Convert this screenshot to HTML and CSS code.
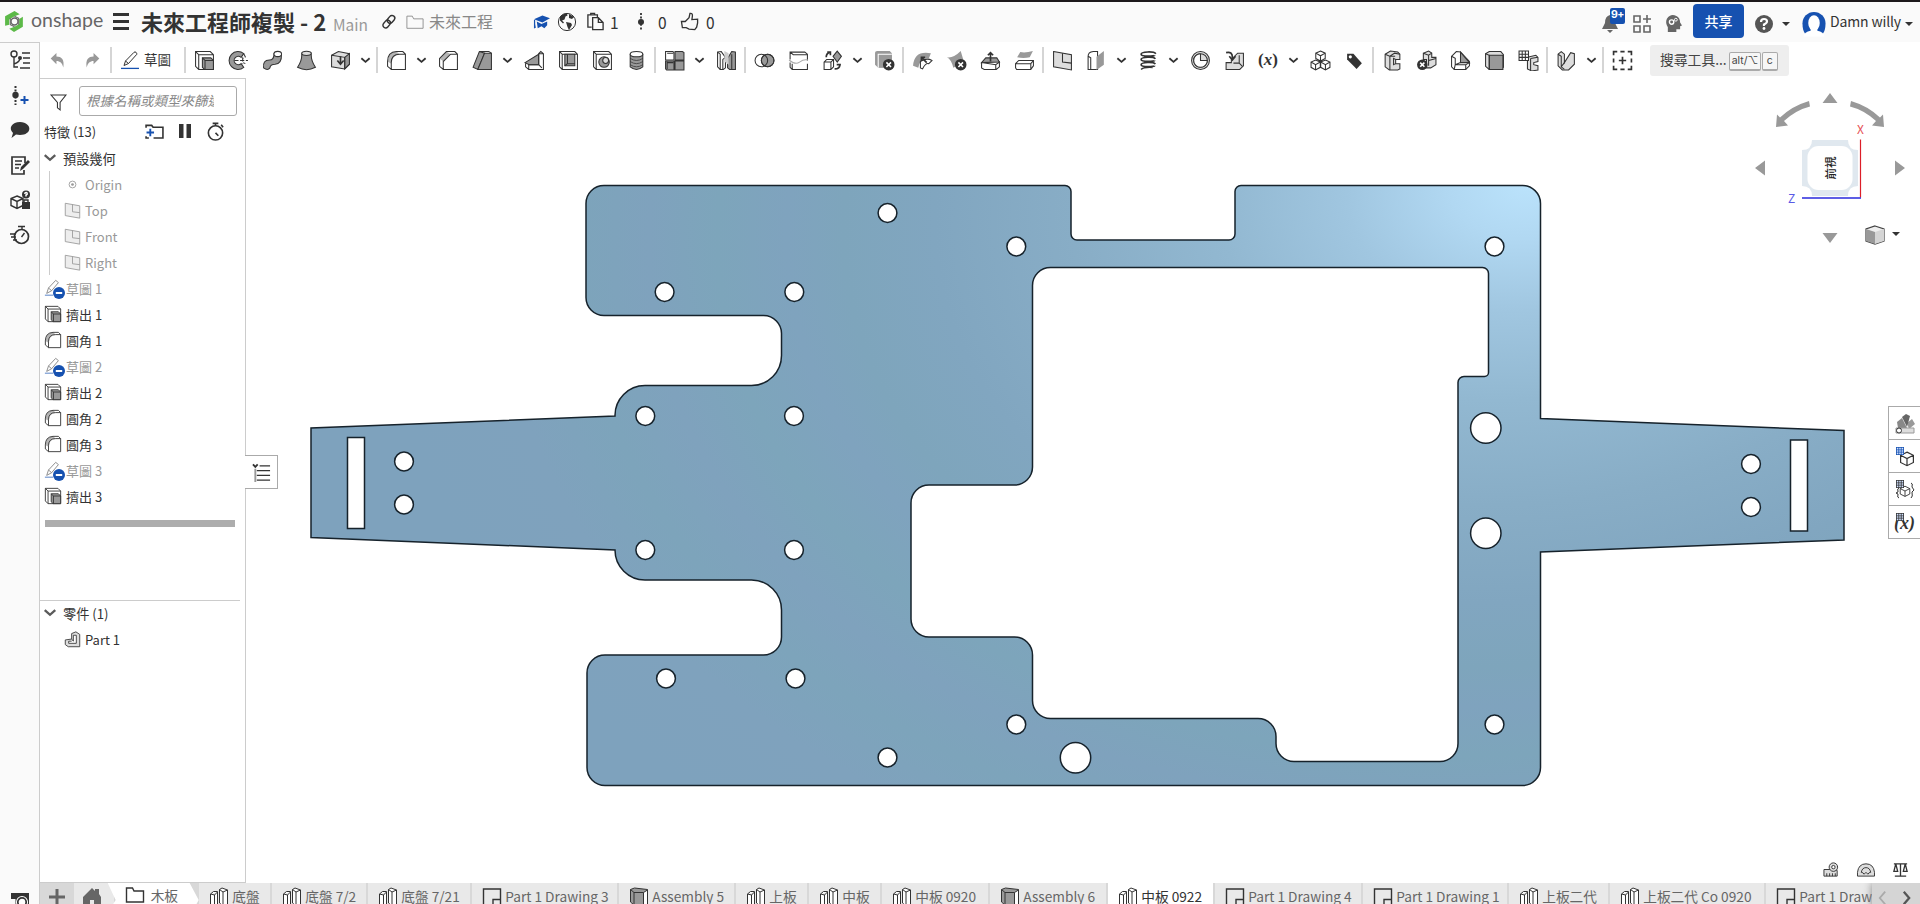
FILE: index.html
```html
<!DOCTYPE html>
<html lang="zh-Hant">
<head>
<meta charset="utf-8">
<title>Onshape</title>
<link rel="stylesheet" href="styles.css">
</head>
<body>
<svg class="defs" width="0" height="0">
<defs>
<symbol id="undo" viewBox="0 0 20 20"><path class="mid" d="M3.500 8 9 2.800v3.400c5 0 7.800 3 6.500 10.400C14.500 12.500 12.500 10.500 9 10.500v3z"/></symbol>
<symbol id="redo" viewBox="0 0 20 20"><path class="mid" d="M16.500 8 11 2.800v3.400c-5 0-7.800 3-6.500 10.400C5.500 12.500 7.500 10.500 11 10.500v3z"/></symbol>
<symbol id="pencil" viewBox="0 0 20 20"><path class="ln" d="m4 15.500 1.500-4.500L14 2.300q1-.8 2 0t.8 2L8.500 13.500zM5.500 11l3 2.500"/><path class="blue-ln" d="M1 18.400h18"/></symbol>
<symbol id="extrude" viewBox="0 0 20 20"><path class="ln" d="M1.500 1.500h14l3 3v14h-14l-3-3zM1.500 1.500l3 3v14M4.500 4.500h14"/><path class="fm" d="M8 7.500h8l2.500 2.500v8.500h-8.500L8 16.500z"/><path class="ln" d="m8 7.500 2.500 2.500v8.500m0-8.500h8"/></symbol>
<symbol id="revolve" viewBox="0 0 20 20"><path class="fm" d="M15 3.500A8.500 8.500 0 1 0 15 16.500L12.500 13A4 4 0 1 1 12.500 7z"/><path class="ln" d="M6 10h13M15 3.500l1.500 3-2 1.500m2 5-2-1M14 7v6" stroke-dasharray="4 1.500"/></symbol>
<symbol id="sweep" viewBox="0 0 20 20"><path class="fm" d="M1.500 17q-1-7.500 5.500-7.500 4.500 0 4.500-6l7 .5q.5 9-6 9.500-4.500 0-5 3.500-2 3-6 0z"/><ellipse class="fw" cx="15" cy="3.800" rx="3.600" ry="2.500"/></symbol>
<symbol id="loft" viewBox="0 0 20 20"><path class="fm" d="M5.500 3Q6 10 1.500 16.500 10 21 18.500 16.500 14 10 14.500 3z"/><ellipse class="fl" cx="10" cy="3.200" rx="4.500" ry="2"/></symbol>
<symbol id="thicken" viewBox="0 0 20 20"><path class="fl" d="M1.500 5 8 1.500l10.500 2v10L14 18 1.500 16z"/><path class="fm" d="m14 7 4.500-3.500v10L14 18z"/><path class="ln" d="M1.500 5 14 7v11"/><path class="bold" d="M10 6v7m-3-3 3 3.500 3-3.500"/></symbol>
<symbol id="fillet" viewBox="0 0 20 20"><path class="fl2" d="M1.500 11Q2 2 10 1.500l3 2.500Q5.500 5 5 13z"/><path class="ln" d="M5 18.500V12Q5 4 13 4h5.500v14.500zM5 18.500l-3.500-3V11Q1.500 2 10 1.500h6l2.500 2.500"/></symbol>
<symbol id="chamfer" viewBox="0 0 20 20"><path class="fl2" d="M1.500 8 8 1.500l4 2.500L5 11z"/><path class="ln" d="M5 18.500V11l7-7h6.500v14.500zM5 18.500l-3.500-3V8L8 1.500h8L18.500 4"/></symbol>
<symbol id="draft" viewBox="0 0 20 20"><path class="fm" d="M1 16.500 7 1.500l5 1.500L5.500 18.500z"/><path class="fm" d="M12 3h6.500v15.500h-13z"/><path class="ln" d="M7 1.500h9L18.500 3"/></symbol>
<symbol id="rib" viewBox="0 0 20 20"><path class="fm" d="M1 12 14 4v10H5z"/><path class="ln" d="M14 3.500 16 1.500l2.500 2v15h-14L1.500 16v-3.500m3 6V14H14V3.500h4.500M14 14l3 3"/></symbol>
<symbol id="shell" viewBox="0 0 20 20"><path class="ln" d="M1.500 1.500H16l2.500 2.500v14.500H4L1.500 16zL4 4v14.500M4 4h14.500"/><path class="fm" d="M6.500 4h9.500v11H6.500z"/><path class="ln" d="M9 4v9h7M6.500 15 9 13"/></symbol>
<symbol id="hole" viewBox="0 0 20 20"><path class="ln" d="M1.500 1.500H16l2.500 2.500v14.500H4L1.500 16zL4 4v14.500M4 4h14.500"/><circle class="fm" cx="11.500" cy="11.500" r="5"/><circle class="fl" cx="13" cy="10" r="2.800"/></symbol>
<symbol id="thread" viewBox="0 0 20 20"><path class="fm" d="M4 4v12q6 5 12 0V4z"/><ellipse class="fw" cx="10" cy="4" rx="6" ry="2.500"/><path class="ln thin" d="M4 8q6 4 12 0M4 11q6 4 12 0M4 14q6 4 12 0"/></symbol>
<symbol id="pattern" viewBox="0 0 20 20"><path class="fw" d="M1.500 1.500h7l1 1v7h-8z"/><path class="fm" d="M10.500 1.500h7l1.500 1v7h-8.500zM1.500 10.500h8v8.500h-7l-1-1zM10.500 10.500H19V19h-8.500z"/><path class="ln" d="M3 11v7m0-6h6m-6-9h6"/></symbol>
<symbol id="mirror" viewBox="0 0 20 20"><path class="fw" d="M1.500 2 5 1.500 9 7v10l-2 1.500H4L1.500 16z"/><path class="fm" d="M18.500 2 15 1.500 11 8v9l2 1.500h5.500z"/><path class="ln" d="m1.500 2 2.500 2v14.500M15 4v14M9 7 6.500 9v9"/><path class="veil" d="M8 1v10l4 3V3z"/></symbol>
<symbol id="boolean" viewBox="0 0 20 20"><circle class="fm" cx="13" cy="10" r="6"/><circle class="ln" cx="7" cy="10" r="6"/><circle class="ln" cx="13" cy="10" r="6"/></symbol>
<symbol id="split" viewBox="0 0 20 20"><path class="ln" d="M2 9V2h14l2.500 2v6M2 12v4.500l2 2h14.500V13M4 18V13M2 2l3 2.500h13"/><path class="soft-ln" d="M1 9.500q6 5 10 2t8-2"/></symbol>
<symbol id="transform" viewBox="0 0 20 20"><path class="fm" d="m14.500 1 4 5-4 5.500-4-5.500z"/><path class="fw" d="M2 11.500 4.500 9H11v7l-2.500 2.500H2zh6.500v7m0-7L11 9"/><path class="bold" d="M4 7q0-4 4-5M5 2h3v3M12 18q5 0 5-4m-3 0h4"/></symbol>
<symbol id="delpart" viewBox="0 0 20 20"><path class="soft" d="M1 2.500Q1 1 3 1h12l2 2v9H4v5l-3-3z"/><path class="soft" d="M4 4h13v13H4z"/><path class="ln-soft" d="M4 17V4h13"/><circle class="dark" cx="14" cy="14" r="5.500"/><path class="white-ln" d="m11.800 11.800 4.400 4.400m0-4.400-4.400 4.400"/></symbol>
<symbol id="modface" viewBox="0 0 20 20"><path class="soft" d="M1 15Q2 0 18 3l-2 5Q8 7 6 17z"/><path class="fw" d="M8 11q6-4 11-1l-3 3q-3-1-6 5l-2-1q0-4 0-6z"/><path class="bold" d="M14 12 9 7m0 3.500V7h3.500"/></symbol>
<symbol id="delface" viewBox="0 0 20 20"><path class="soft" d="M1 7q6 1 13-6l3 10-10 6Q5 9 1 7z"/><circle class="dark" cx="14" cy="14" r="5.500"/><path class="white-ln" d="m11.800 11.800 4.400 4.400m0-4.400-4.400 4.400"/></symbol>
<symbol id="moveface" viewBox="0 0 20 20"><path class="fm" d="m1.500 12 4-4.500H16l2.500 4z"/><path class="fw" d="M1.500 12 15 14l3.500-2.500V16l-3 2.500H4L1.500 17zM15 14v4.500"/><path class="bold" d="M10 11V2.500M7.500 5 10 2.500 12.500 5"/></symbol>
<symbol id="replace" viewBox="0 0 20 20"><path class="soft" d="M3 7 6 2q5 1 12-1l-3 6q-6 1-12 0z"/><path class="fw" d="m1.500 13 3-3h14v5L16 18.500H2.500l-1-1.500zH16l2.500-3M16 13v5.500"/></symbol>
<symbol id="plane" viewBox="0 0 20 20"><path class="fl" d="m1.500 1.500 17 3v14.500l-17-3z"/><path class="ln" d="M10 3v8.500l8.500 1"/></symbol>
<symbol id="frame" viewBox="0 0 20 20"><path class="fw" d="M2 6q0-4 5-4.500h4v17H2zM2 6l2.500 1.500v11"/><path class="soft" d="M10 6.500 17 1v13l-7 5z"/></symbol>
<symbol id="helix" viewBox="0 0 20 20"><path class="bold" d="M17 3.500C15 1 3 1.500 3 4s13 2 13 1M16.500 8.500C15 6 3 6.500 3 9s13 2 13 1M16.500 13.500C15 11 3 11.500 3 14s13 2 13 1M14 16.500q-9-.5-11 2"/></symbol>
<symbol id="clock" viewBox="0 0 20 20"><circle class="fl" cx="10" cy="10" r="8.500"/><circle class="ln" cx="10" cy="10" r="6.500"/><path class="fw" d="M10 3.500V10h6.500A6.500 6.500 0 1 1 10 3.500"/></symbol>
<symbol id="insert" viewBox="0 0 20 20"><path class="fl" d="M2 12h5v-3l6-6h5.500v12L15 18.500H2z"/><path class="ln" d="M9 12.500h5.500V5M14.500 12.500l3 3"/><path class="bold" d="M2 2.500Q8 1 8 7v2M5 6l3 3.500L11 6"/></symbol>
<symbol id="cubes" viewBox="0 0 20 20"><path class="fw" d="m10 1 4.500 2v5L10 10.500 5.500 8V3zM5.500 3 10 5.500 14.500 3M10 5.500v5M5.300 9.500l4.500 2v5L5.300 19 1 16.500v-5zM1 11.500 5.300 14l4.500-2.500M5.300 14v5M14.700 9.500l4.300 2v5L14.700 19l-4.500-2.500v-5zM10.200 11.500l4.500 2.500 4.300-2.500M14.700 14v5"/></symbol>
<symbol id="tag" viewBox="0 0 20 20"><path class="dark" d="M3 3.500h6l8 9-5 5.500L3 9z"/><circle class="white" cx="6" cy="6.500" r="1.500"/></symbol>
<symbol id="sheet" viewBox="0 0 20 20"><path class="fl" d="M3 4 8 1l7 1 2 2v5h-4v4h4v5l-2 1H7l-4-3z"/><path class="ln" d="M3 4 7.500 6v13M7.500 6 12 3l5 1M7.500 6h5M13 9l-2-1v6l2-1"/></symbol>
<symbol id="sheetx" viewBox="0 0 20 20"><path class="fl" d="m7 3 5-2 3 2v4h4v7l-5 3h-4V9H7z"/><path class="ln" d="m7 3 5 2 3-2M12 5v5l7-2m-7 2v5"/><circle class="dark" cx="6" cy="14" r="5"/><path class="white-ln" d="m4 12 4 4m0-4-4 4"/></symbol>
<symbol id="flange" viewBox="0 0 20 20"><path class="fw" d="M1.500 6 6 1.500 10 2l8.500 9v4L15 18.500H4L1.500 16z"/><path class="fm" d="M10 2v10h8.500z"/><path class="ln" d="M1.500 6 5 8V14L10 12M5 14l-1 4.500M5 14h10l3.500-2M15 14v4.500"/></symbol>
<symbol id="box" viewBox="0 0 20 20"><path class="fl" d="M1.500 3.500 5 1.500h11l2.500 3v12L16 18.500H5l-3.500-3z"/><path class="fm" d="M5 5h13v13.500H5z"/><path class="ln" d="M1.500 3.500 5 5v13.500"/></symbol>
<symbol id="sheettab" viewBox="0 0 20 20"><path class="fl" d="m9 7 8-2 2 2v4l-4 1v2l4 1v4l-6 1-4-2z"/><path class="ln" d="m12 8v11m0-11 7-1"/><path class="fw" d="M1 1h9v9H1zM4 1v9m3-9v9M1 4h9M1 7h9"/></symbol>
<symbol id="bend" viewBox="0 0 20 20"><path class="fl" d="M2 4 5 1.500 8 4v8l6-9.500 3.500 1v10L12 19H6l-4-4z"/><path class="ln" d="M2 4 5 6v10l3 2.500M8 12l-3 4"/></symbol>
<symbol id="addtool" viewBox="0 0 20 20"><path class="bold" d="M1.500 5V1.500H5m3 0h4m3 0h3.500V5m0 3v4m0 3v3.500H15m-3 0H8m-3 0H1.500V15m0-3V8M10 6.500v7M6.500 10h7"/></symbol>
<symbol id="chev" viewBox="0 0 12 12"><path class="chev" d="m1.500 3.500 4.500 4 4.500-4"/></symbol>
<symbol id="sup" viewBox="0 0 20 20"><path class="ln" d="m3 16 2-6L13 1.500l3 2.500L8.500 13zM5 10l3.500 3"/><path class="blue-ln" d="M1 18h9"/></symbol>
<symbol id="minus" viewBox="0 0 12 12"><circle cx="6" cy="6" r="6" fill="#1651b0"/><path d="M2.800 6h6.400" stroke="#fff" stroke-width="2"/></symbol>
<symbol id="studio" viewBox="0 0 20 20"><path class="fw" d="M1.500 18.500V7l3-2.500h4V17l-3 2h-4zM1.500 7l4 1 3-3M5.500 8v11M10.500 16V2.500L13 1l5.500 2v16H14l-3.500-3zM10.500 2.500 14 5v14M14 5l4.500-2"/></symbol>
<symbol id="drawing" viewBox="0 0 20 20"><path class="thick" d="M1.500 2h17v17h-17zM11 19v-6.500h7.500"/></symbol>
<symbol id="asm" viewBox="0 0 20 20"><path class="fm" d="m1.500 2.500 4-1.500L18.500 2.500v14.500l-4 2L5 18l-3.500-3z"/><path class="fw" d="M14.500 5.500l4-2.500v14l-4 2z"/><path class="ln" d="m1.500 2.500 3.500 3h9.500M5 5.500V18"/></symbol>
<symbol id="folder" viewBox="0 0 20 20"><path class="ln" d="M1 17V3.500h6l1.500 3H19V17z"/></symbol>
<symbol id="part" viewBox="0 0 20 20"><path class="fl" d="M1.500 10.500 9 9.500V3l5-2 4.500 3v14.500H5L1.500 16z"/><path class="fw" d="M9 9.500 11 12V5h3.500v9.500H5.500V12h3.500"/></symbol>
<symbol id="grid" viewBox="0 0 10 10"><path d="M0 0h10v10H0z" fill="currentColor"/><path d="M1 1h2v2H1zM4 1h2v2H4zM7 1h2v2H7zM1 4h2v2H1zM4 4h2v2H4zM7 4h2v2H7zM1 7h2v2H1zM4 7h2v2H4zM7 7h2v2H7z" fill="#cfe0ff"/></symbol>
<symbol id="cube" viewBox="0 0 20 20"><path class="thick-w" d="m10 2 8 4v9l-8 4-8-4V6zM2 6l8 4 8-4M10 10v9"/></symbol>
<symbol id="stopw" viewBox="0 0 20 20"><circle class="thick2" cx="10" cy="11.500" r="7.500"/><path class="thick2" d="M7 1.500h6M10 1.500V4M16 3l2 2.500M10 11.500l3 3"/></symbol>
</defs>
</svg>

<div class="app">
<header class="header">
  <svg class="logo" viewBox="0 0 20 22"><path d="m1 15V6l9-5 5 3-5 2-5 3v5zM18 6.500V16l-8.500 5L5 18l5-2 4.500-2.500v-5z" fill="#5cb948"/><circle cx="10" cy="11" r="3.300" fill="none" stroke="#666" stroke-width="1.300"/><path d="M6 8v6l4 2M14 14V8l-4-2" fill="none" stroke="#666"/></svg>
  <span class="brand">onshape</span>
  <span class="burger"><i></i><i></i><i></i></span>
  <h1 class="title">未來工程師複製 - 2</h1>
  <span class="main-label">Main</span>
  <svg class="i-link" viewBox="0 0 16 16"><g class="thick"><rect x="7.500" y="1" width="5.500" height="8.500" rx="2.700" transform="rotate(40 10 5)"/><rect x="3" y="6" width="5.500" height="8.500" rx="2.700" transform="rotate(40 6 10)"/></g></svg>
  <svg class="i-folder" viewBox="0 0 20 20"><use href="#folder"/></svg>
  <span class="crumb">未來工程</span>
  <svg class="i-edu" viewBox="0 0 18 16"><path d="m1 5 9-4 8 3-8 4.500zM4 7.500l5 2.500 6-2.500v4l-3 3-3-2-4 2zM1 6h1.300v4l.7 4-2 1z" fill="#1651b0"/></svg>
  <svg class="i-globe" viewBox="0 0 20 20"><circle cx="10" cy="10" r="8.600" class="ln"/><path d="M3 5q3-4 7-3.500l.5 2-2 1-1 3-2.500 1 2 2-1 1-3-3zM12 2l5 3-2 2-3-1zM9 10l5 1 1 2-3 5-1.500-3z" fill="#333"/></svg>
  <svg class="i-copy" viewBox="0 0 20 20"><path class="thick" d="M6 16H2V3h10v3M5 3V1.500h4V3M7 6h6l5 5v7.500H7zM13 6v5h5"/></svg>
  <span class="count c1">1</span>
  <svg class="i-ver" viewBox="0 0 8 20"><path d="M4 1v18" stroke="#333" stroke-width="1.800" stroke-dasharray="2 1.600"/><circle cx="4" cy="10" r="3" fill="#333"/></svg>
  <span class="count c2">0</span>
  <svg class="i-like" viewBox="0 0 20 20"><path class="thick" d="M1 10h4l4-4 1-4.500q3-.5 2.500 3L12 8l6-.5v4L17 16l-2 2.500-6-.5-3-1.500H2z"/></svg>
  <span class="count">0</span>
  <span class="spring"></span>
  <span class="bell"><svg viewBox="0 0 16 20"><path d="M8 2q5 1 5 8l3 6H0l3-6Q3 3 8 2zM5 17h6l-3 3z" fill="#666"/></svg><b>9+</b></span>
  <svg class="i-apps" viewBox="0 0 20 20"><path d="M2 2h6v6H2zM2 12h6v6H2zM12 12h6v6h-6zM15 1v8M11 5h8" fill="none" stroke="#666" stroke-width="1.600"/></svg>
  <svg class="i-head" viewBox="0 0 18 20"><path d="M3 19v-5Q0 9 2 5q4-6 10-3 4 2 4 7l2 3-2 1v3h-4v3z" fill="#666"/><circle cx="7" cy="8.500" r="2.300" fill="none" stroke="#fff" stroke-width="1.500"/><circle cx="11.500" cy="6" r="1.500" fill="none" stroke="#fff"/></svg>
  <button class="share">共享</button>
  <svg class="i-help" viewBox="0 0 18 18"><circle cx="9" cy="9" r="9" fill="#555"/><path d="M6 7q0-3 3-3t3 2.500Q12 8 9 9.500V11" fill="none" stroke="#fff" stroke-width="2.200"/><circle cx="9" cy="13.500" r="1.400" fill="#fff"/></svg>
  <i class="caret"></i>
  <svg class="i-user" viewBox="0 0 24 26"><path d="M3 24Q0 20 0 13A12 12 0 0 1 24 13q0 7-3 11z" fill="#1651b0"/><ellipse cx="12" cy="12.500" rx="6" ry="8" fill="#fff"/><path d="M1 26.500q1-5 7.500-6v-3h7v3q6.500 1 7.500 6z" fill="#fff"/></svg>
  <span class="user">Damn willy</span>
  <i class="caret"></i>
</header>

<div class="body">
<nav class="rail">
  <svg viewBox="0 0 20 20"><path class="thick" d="M12 3h8M13 8h7M13 13h7M10 18h10M4 7v10h4M4 14q6-2 6-6"/><circle class="thick" cx="4" cy="4" r="3"/><circle cx="10" cy="8" r="2" class="dark"/></svg>
  <svg viewBox="0 0 20 20"><path d="M5.500 1v19" stroke="#333" stroke-width="2" stroke-dasharray="2 1.500"/><circle cx="5.500" cy="10" r="3.200" class="dark"/><path d="M14.500 11v8M10.500 15h8" stroke="#1651b0" stroke-width="2"/></svg>
  <svg viewBox="0 0 20 20"><path class="dark" d="M10 2c13 1 12 13 0 13l-4-.5L1.500 18l1.500-5C-2 8 2 2 10 2z"/></svg>
  <svg viewBox="0 0 20 20"><path class="thick2" d="M15 8V2H2v17h12v-4M5 6h7M5 9.500h6M5 13h4"/><path class="dark" d="m10 16 1-4 7-7 2 2-7 7z"/></svg>
  <svg viewBox="0 0 20 20"><path class="thick" d="m7 6 6 2.500v7L7 18.500l-6-3v-7zM1 8.500l6 3 6-3M7 11.500v7"/><circle cx="16" cy="4.500" r="4" class="dark"/><path class="dark" d="M12 12h8v7h-8z"/><path class="thick" d="M14 12v-2h4v2"/><path class="white-ln" d="M14.800 4q0-1.500 1.300-1.500t1 1.800L16 5v1.500"/></svg>
  <svg viewBox="0 0 20 20"><circle class="thick2" cx="11.500" cy="11.500" r="7"/><path class="thick" d="M8 1.500h7M12 1.500v3M11.500 12l3-4M0 9h6M1 12h5M3 15h4"/></svg>
  <span class="spring"></span>
  <svg class="snap" viewBox="0 0 20 20"><path class="dark" d="M1 2h18v17H1z"/><circle cx="12" cy="11" r="6" fill="#fff"/><circle class="thick2" cx="12" cy="11" r="4.200"/><path d="M1 8h4.500v12H1z" fill="#fafafa"/></svg>
</nav>
<div class="work">
<div class="toolbar">
  <span class="t first"><svg><use href="#undo"/></svg></span><span class="t"><svg><use href="#redo"/></svg></span><i class="s"></i>
  <span class="sketch"><svg><use href="#pencil"/></svg><span>草圖</span></span><i class="s"></i>
  <span class="t"><svg><use href="#extrude"/></svg></span><span class="t"><svg><use href="#revolve"/></svg></span><span class="t"><svg><use href="#sweep"/></svg></span><span class="t"><svg><use href="#loft"/></svg></span><span class="t"><svg><use href="#thicken"/></svg></span><span class="v"><svg><use href="#chev"/></svg></span><i class="s"></i>
  <span class="t"><svg><use href="#fillet"/></svg></span><span class="v"><svg><use href="#chev"/></svg></span><span class="t"><svg><use href="#chamfer"/></svg></span><span class="t"><svg><use href="#draft"/></svg></span><span class="v"><svg><use href="#chev"/></svg></span><span class="t"><svg><use href="#rib"/></svg></span><span class="t"><svg><use href="#shell"/></svg></span><span class="t"><svg><use href="#hole"/></svg></span><span class="t"><svg><use href="#thread"/></svg></span><i class="s"></i>
  <span class="t"><svg><use href="#pattern"/></svg></span><span class="v"><svg><use href="#chev"/></svg></span><span class="t"><svg><use href="#mirror"/></svg></span><i class="s"></i>
  <span class="t"><svg><use href="#boolean"/></svg></span><span class="t"><svg><use href="#split"/></svg></span><span class="t"><svg><use href="#transform"/></svg></span><span class="v"><svg><use href="#chev"/></svg></span><span class="t"><svg><use href="#delpart"/></svg></span><i class="s"></i>
  <span class="t"><svg><use href="#modface"/></svg></span><span class="t"><svg><use href="#delface"/></svg></span><span class="t"><svg><use href="#moveface"/></svg></span><span class="t"><svg><use href="#replace"/></svg></span><i class="s"></i>
  <span class="t"><svg><use href="#plane"/></svg></span><span class="t"><svg><use href="#frame"/></svg></span><span class="v"><svg><use href="#chev"/></svg></span><span class="t"><svg><use href="#helix"/></svg></span><span class="v"><svg><use href="#chev"/></svg></span><span class="t"><svg><use href="#clock"/></svg></span><span class="t"><svg><use href="#insert"/></svg></span><span class="t var">(<em>x</em>)</span><span class="v"><svg><use href="#chev"/></svg></span><span class="t"><svg><use href="#cubes"/></svg></span><span class="t"><svg><use href="#tag"/></svg></span><i class="s"></i>
  <span class="t"><svg><use href="#sheet"/></svg></span><span class="t"><svg><use href="#sheetx"/></svg></span><span class="t"><svg><use href="#flange"/></svg></span><span class="t"><svg><use href="#box"/></svg></span><span class="t"><svg><use href="#sheettab"/></svg></span><i class="s"></i>
  <span class="t"><svg><use href="#bend"/></svg></span><span class="v"><svg><use href="#chev"/></svg></span><i class="s"></i>
  <span class="t"><svg><use href="#addtool"/></svg></span>
  <span class="search"><span>搜尋工具...</span><kbd class="k1">alt/⌥</kbd><kbd>c</kbd></span>
</div>

<div class="stage">
<aside class="panel">
  <div class="filter"><svg viewBox="0 0 16 16"><path class="ln" d="M1 1h14L9.500 8v7L7 13V8z"/></svg><div class="input"><span>根據名稱或類型來篩選</span></div></div>
  <div class="feat-head"><span>特徵 (13)</span>
    <svg class="fh1" viewBox="0 0 20 16"><path class="thick2" d="M1 4V1.500h6l1.500 2H19V15H9M1 13v2h3"/><path d="M5.500 5v8M1.500 9h8" stroke="#1651b0" stroke-width="2"/></svg>
    <svg class="fh2" viewBox="0 0 12 14"><path class="dark" d="M0 0h4.500v14H0zM7.500 0H12v14H7.500z"/></svg>
    <svg class="fh3" viewBox="0 0 20 20"><use href="#stopw"/></svg></div>
  <div class="group"><svg><use href="#chev"/></svg>預設幾何</div>
  <div class="children">
    <div class="row"><svg viewBox="0 0 20 20"><circle class="ln" cx="10" cy="10" r="4"/><circle cx="10" cy="10" r="1.600" class="dark"/></svg>Origin</div>
    <div class="row"><svg><use href="#plane"/></svg>Top</div>
    <div class="row"><svg><use href="#plane"/></svg>Front</div>
    <div class="row"><svg><use href="#plane"/></svg>Right</div>
  </div>
  <div class="row off"><svg><use href="#sup"/></svg><svg class="badge"><use href="#minus"/></svg><span>草圖 1</span></div>
  <div class="row"><svg><use href="#extrude"/></svg>擠出 1</div>
  <div class="row"><svg><use href="#fillet"/></svg>圓角 1</div>
  <div class="row off"><svg><use href="#sup"/></svg><svg class="badge"><use href="#minus"/></svg><span>草圖 2</span></div>
  <div class="row"><svg><use href="#extrude"/></svg>擠出 2</div>
  <div class="row"><svg><use href="#fillet"/></svg>圓角 2</div>
  <div class="row"><svg><use href="#fillet"/></svg>圓角 3</div>
  <div class="row off"><svg><use href="#sup"/></svg><svg class="badge"><use href="#minus"/></svg><span>草圖 3</span></div>
  <div class="row"><svg><use href="#extrude"/></svg>擠出 3</div>
  <div class="rollback"></div>
  <div class="parts">
    <div class="group"><svg><use href="#chev"/></svg>零件 (1)</div>
    <div class="row part"><svg><use href="#part"/></svg>Part 1</div>
  </div>
</aside>

<main class="canvas">
<svg class="board" viewBox="246 78 1674 805" width="1674" height="805">
  <defs><radialGradient id="shade" gradientUnits="userSpaceOnUse" cx="0" cy="0" r="1" gradientTransform="translate(1530 182) rotate(-8) scale(1150 800)">
    <stop offset="0" stop-color="#bbe3fc"/><stop offset=".07" stop-color="#b1d8f2"/><stop offset=".16" stop-color="#a0c6e0"/><stop offset=".27" stop-color="#92b8d1"/><stop offset=".4" stop-color="#88adc6"/><stop offset=".52" stop-color="#81a6c0"/><stop offset=".6" stop-color="#7ea5bc"/><stop offset=".65" stop-color="#7fa3be"/><stop offset=".71" stop-color="#7da5bb"/><stop offset=".77" stop-color="#7fa2bd"/><stop offset=".83" stop-color="#7da4bb"/><stop offset=".9" stop-color="#7fa2bd"/><stop offset="1" stop-color="#7ea2bd"/></radialGradient></defs>
  <path fill="url(#shade)" fill-rule="evenodd" stroke="#16222b" stroke-width="1.500" d="M604 185.500H1065a6 6 0 0 1 6 6V234a6 6 0 0 0 6 6H1229a6 6 0 0 0 6-6V191.500a6 6 0 0 1 6-6H1522a18 18 0 0 1 18.500 18V418.500L1844 430.500V540L1540.500 552V767a18 18 0 0 1-18 18.500H605a18 18 0 0 1-18-18V673a18 18 0 0 1 18-18H763.500a18 18 0 0 0 18-18V610a30 30 0 0 0-30-30H645a30 30 0 0 1-30-30L311 537.500V428L615 416a30 30 0 0 1 30-30.500H751.500a30 30 0 0 0 30-30V334a18 18 0 0 0-18-18.500H604a18 18 0 0 1-18-18V203.500a18 18 0 0 1 18-18z
  M1050.500 267.500a18 18 0 0 0-18 18V467a18 18 0 0 1-18 18H929a18 18 0 0 0-18 18V619a18 18 0 0 0 18 18H1014.500a18 18 0 0 1 18 18V700.500a18 18 0 0 0 18 18H1258a18 18 0 0 1 18 18V743.500a18 18 0 0 0 18 18H1440a18 18 0 0 0 18-18V382.500a6 6 0 0 1 6-6H1484.500a4 4 0 0 0 4-4V273.500a6 6 0 0 0-6-6z"/>
  <g class="cut">
    <circle cx="887.500" cy="213" r="9.400"/><circle cx="1016.300" cy="246.500" r="9.400"/><circle cx="1494.500" cy="246.500" r="9.400"/><circle cx="664.600" cy="292" r="9.400"/><circle cx="794.300" cy="292" r="9.400"/><circle cx="645.300" cy="416" r="9.400"/><circle cx="794" cy="416" r="9.400"/><circle cx="645.300" cy="550" r="9.400"/><circle cx="794" cy="550" r="9.400"/><circle cx="666" cy="678.500" r="9.400"/><circle cx="795.500" cy="678.500" r="9.400"/><circle cx="887.500" cy="757.500" r="9.400"/><circle cx="1016.300" cy="724.500" r="9.400"/><circle cx="1494.500" cy="724.500" r="9.400"/><circle cx="404" cy="461.500" r="9.400"/><circle cx="404" cy="504.500" r="9.400"/><circle cx="1751" cy="464" r="9.400"/><circle cx="1751" cy="507" r="9.400"/>
    <circle cx="1485.800" cy="428" r="15.200"/><circle cx="1485.800" cy="533.300" r="15.200"/><circle cx="1075.500" cy="757.800" r="15.200"/>
    <rect x="347.500" y="437.500" width="17" height="91"/><rect x="1790.500" y="440" width="17" height="91"/>
  </g>
</svg>
<div class="list-tab"><svg viewBox="0 0 20 20"><path d="M8 3h11M5 8h14M5 13h14M5 18h14" stroke="#333" stroke-width="1.200"/><path d="M3.500 6v14" stroke="#999" stroke-width="2"/><path class="chev" d="m1 1.500 2.500 2.500L6 1.500"/></svg></div>
<svg class="viewcube" viewBox="0 0 190 180">
  <g fill="#999"><path d="m100 13 7.500 10h-15zM100 163l7.500-10h-15zM25 88l10-7.500v15zM175 88l-10-7.500v15z"/><path d="M79 21 80 26.500Q66 30 54 41l4 4.500-12 1.500 1-12.500 3 3Q62 26 79 21zM121 21l-1 5.500q14 3.500 26 14.500l-4 4.500 12 1.500-1-12.500-3 3Q138 26 121 21z"/></g>
  <path d="M82 60h36q0 10 10 10v36q-10 0-10 10H82q0-10-10-10V70q10 0 10-10z" fill="#e0e8ef"/><rect x="77.500" y="66" width="45" height="44" rx="11" fill="#fff"/>
  <path d="M130.500 59.500v58" stroke="#dc1e28" stroke-width="1.200"/><path d="M72 118h59" stroke="#2828dc" stroke-width="1.300"/>
  <text x="127" y="53.500" class="axis" fill="#e65055">X</text><text x="58" y="123" class="axis" fill="#5a5ae6">Z</text>
  <text transform="translate(105 99.500) rotate(-90)" class="face">前視</text>
  <path d="m145 146 9 3v12l-9 3-9-3v-12z" fill="#eee" stroke="#444" stroke-width="1.200"/><path d="m136 149 9 3v12l-9-3z" fill="#999"/><path d="m154 149-9 3v12l9-3z" fill="#d5d5d5"/><path d="M162 152h8l-4 4z" fill="#333"/>
</svg>
<div class="right-tabs">
  <span><svg viewBox="0 0 20 20"><path d="m2 8 5-4 5 10H3z" fill="#888"/><path class="soft" d="m12 9 5-4 3 5-6 5z"/><path d="m7 3 4-3 4 2-3 11z" fill="#666"/><path d="M1 14h18v5H1z" fill="#ddd" stroke="#999"/><circle class="fw" cx="4" cy="16.500" r="2.500"/></svg></span>
  <span class="bl"><svg viewBox="0 0 20 20"><use href="#cube" x="4" y="3" width="16" height="17"/><use href="#grid" width="10" height="8"/></svg></span>
  <span><svg viewBox="0 0 20 20"><path class="ln" d="M4 8q-2 0-1 4l-2 1 2 1q-1 4 1 4M16 3q2 0 1 4l2 3-2 2q1 5-1 6"/><use href="#cube" x="4" y="4" width="12" height="14"/><use href="#grid" width="10" height="8"/></svg></span>
  <span><svg viewBox="0 0 20 20"><text x="-1" y="15.500" class="vx">(x)</text><use href="#grid" width="10" height="8"/></svg></span>
</div>
<div class="measure">
  <svg viewBox="0 0 18 18"><path class="fl" d="M1 9h8l6 1v6H1z"/><circle class="fl" cx="11" cy="6.500" r="4.500"/><circle class="fw" cx="11" cy="6.500" r="1.800"/><path class="ln" d="M4 13v3m3-3v3m3-3v3m3-3v3"/></svg>
  <svg class="wide" viewBox="0 0 20 18"><path class="fl" d="M1 16v-4q1-9 9-9t9 9v4zM5 12q1-5 5-5t5 5q-2 0-3 2l-2-2-2 2q-1-2-3-2z"/></svg>
  <svg viewBox="0 0 18 18"><path class="thick" d="M2 3h14M9 3v13M3 16h12M4 3 2 11h4zM14 3l-2 8h4z"/></svg>
</div>
</main>
</div>

<footer class="tabs">
  <span class="plus"><svg viewBox="0 0 16 16"><path d="M8 0v16M0 8h16" stroke="#666" stroke-width="3"/></svg></span>
  <span class="home"><svg viewBox="0 0 20 20"><path d="M1 11 10 2l3 3V3h4v5l2 3v9h-7v-6H8v6H1z" fill="#666"/></svg></span>
  <span class="crumb-tab"><svg viewBox="0 0 20 20"><path class="thick" d="M1.500 17V3h6l1.500 3h9.500v11z"/></svg>木板</span>
  <span class="tab" style="width:73px"><svg><use href="#studio"/></svg>底盤</span>
  <span class="tab" style="width:96px"><svg><use href="#studio"/></svg>底盤 7/2</span>
  <span class="tab" style="width:104px"><svg><use href="#studio"/></svg>底盤 7/21</span>
  <span class="tab" style="width:147px"><svg><use href="#drawing"/></svg>Part 1 Drawing 3</span>
  <span class="tab" style="width:117px"><svg><use href="#asm"/></svg>Assembly 5</span>
  <span class="tab" style="width:73px"><svg><use href="#studio"/></svg>上板</span>
  <span class="tab" style="width:73px"><svg><use href="#studio"/></svg>中板</span>
  <span class="tab" style="width:108px"><svg><use href="#studio"/></svg>中板 0920</span>
  <span class="tab" style="width:118px"><svg><use href="#asm"/></svg>Assembly 6</span>
  <span class="tab on" style="width:107px"><svg><use href="#studio"/></svg>中板 0922</span>
  <span class="tab" style="width:148px"><svg><use href="#drawing"/></svg>Part 1 Drawing 4</span>
  <span class="tab" style="width:146px"><svg><use href="#drawing"/></svg>Part 1 Drawing 1</span>
  <span class="tab" style="width:101px"><svg><use href="#studio"/></svg>上板二代</span>
  <span class="tab" style="width:156px"><svg><use href="#studio"/></svg>上板二代 Co 0920</span>
  <span class="tab last"><svg><use href="#drawing"/></svg>Part 1 Draw</span>
  <span class="pager"><svg viewBox="0 0 10 18"><path d="m8 2-6 7 6 7" fill="none" stroke="#aaa" stroke-width="2"/></svg><svg viewBox="0 0 10 18"><path d="m2 2 6 7-6 7" fill="none" stroke="#555" stroke-width="2.500"/></svg></span>
</footer>
</div>
</div>
</div>
</body>
</html>
```
FILE: styles.css
```css
* { box-sizing: border-box; }
body { margin: 0; width: 1920px; height: 904px; overflow: hidden; background: #fff; color: #333; font-family: "Noto Sans CJK TC", "Noto Sans", sans-serif; font-size: 14px; }
svg { display: block; flex: none; overflow: visible; }
.defs { position: absolute; }
.app { display: flex; flex-direction: column; width: 1920px; height: 904px; }
.spring { flex: 1; }

.ln { fill: none; stroke: #333; stroke-width: 1; }
.fm { fill: #999; stroke: #333; stroke-width: 1; }
.fl { fill: #ddd; stroke: #333; stroke-width: 1; }
.fl2 { fill: #b5b5b5; }
.fw { fill: #fff; stroke: #333; stroke-width: 1; }
.thin { stroke-width: .7; }
.soft { fill: #999; }
.veil { fill: #ccc; }
.mid { fill: #999; }
.soft-ln, .ln-soft { fill: none; stroke: #aaa; }
.ln-soft { stroke: #fff; }
.dark { fill: #333; }
.white { fill: #fff; }
.white-ln { fill: none; stroke: #fff; stroke-width: 1.5; }
.blue-ln { fill: none; stroke: #1651b0; stroke-width: 1.3; }
.bold { fill: none; stroke: #333; stroke-width: 1.6; }
.thick, .thick2 { fill: none; stroke: #333; stroke-width: 1.4; }
.thick2 { stroke-width: 1.7; }
.thick-w { fill: #fff; stroke: #333; stroke-width: 1.5; }
.chev { fill: none; stroke: #333; stroke-width: 2; }

.header { display: flex; align-items: center; height: 42px; border-top: 2px solid #1d191c; background: #fafafa; padding-left: 4px; white-space: nowrap; }
.logo { width: 21px; height: 23px; margin-top: -1px; }
.brand { margin-left: 6px; width: 69px; font: 19.5px Lato, sans-serif; color: #666; line-height: 26px; margin-top: -4px; }
.burger { display: flex; flex-direction: column; gap: 4px; margin: -1px 0 0 13px; width: 16px; }
.burger i { height: 3px; background: #333; }
.title { margin: -3px 0 0 12px; width: 184px; font-size: 22px; line-height: 32px; font-weight: 700; }
.main-label { margin: 4px 0 0 8px; width: 35px; font-size: 15.5px; line-height: 24px; color: #999; }
.i-link { width: 16px; height: 16px; margin-left: 13px; }
.i-folder { width: 20px; height: 18px; margin-left: 8px; opacity: .55; }
.crumb { margin-left: 4px; width: 66px; font-size: 16px; color: #888; line-height: 24px; margin-top: -2px; }
.i-edu { width: 17px; height: 16px; margin: -1px 0 0 38px; }
.i-globe { width: 20px; height: 20px; margin: -1px 0 0 7px; }
.i-copy { width: 19px; height: 19px; margin: -1px 0 0 9px; }
.count { font-size: 15.5px; line-height: 24px; width: 9px; margin-top: -1px; }
.c1 { margin: -1px 18px 0 5px; }
.i-ver { width: 8px; height: 20px; }
.c2 { margin: -1px 13px 0; }
.c2 + .i-like { margin: -1px 6px 0 0; }
.i-like { width: 20px; height: 19px; }
.bell { position: relative; margin-right: 8px; }
.bell svg { width: 16px; height: 20px; margin: 2px 6px 0 0; }
.bell b { position: absolute; left: 8px; top: -3px; width: 15px; height: 16px; border-radius: 2px; background: #1651b0; color: #fff; font: 700 10.5px/13px Inter, sans-serif; text-align: center; letter-spacing: -.5px; }
.i-apps { width: 20px; height: 20px; margin-top: 3px; }
.i-head { width: 17px; height: 19px; margin: 3px 11px 0 13px; }
.share { width: 51px; height: 34px; margin-top: -2px; border: 0; padding: 0; border-radius: 4px; background: #1651b0; color: #fff; font: 500 14px "Noto Sans CJK TC", sans-serif; }
.i-help { width: 18px; height: 18px; margin: 3px 9px 0 11px; }
.caret { width: 0; border: 4px solid transparent; border-top-color: #333; border-bottom: 0; margin-top: 3px; }
.i-user { width: 24px; height: 25px; margin: 2px 4px 0 12px; }
.user { width: 71px; line-height: 20px; font-size: 14px; letter-spacing: -.15px; margin: -3px 4px 0 0; }
.user + .caret { margin-right: 7px; }

.body { display: flex; flex: 1; min-height: 0; }
.rail { width: 40px; background: #fafafa; border-right: 1px solid #ccc; border-top: 1px solid #ccc; display: flex; flex-direction: column; align-items: center; padding-top: 7px; }
.rail svg { width: 20px; height: 20px; margin-bottom: 15px; }
.rail .snap { margin: 0 0 -7px; }
.work { flex: 1; min-width: 0; display: flex; flex-direction: column; }
.toolbar { display: flex; align-items: center; height: 36px; white-space: nowrap; }
.t { width: 34px; display: flex; justify-content: center; flex: none; }
.first { width: 35px; }
.t svg { width: 21px; height: 21px; }
.v { width: 18px; padding-left: 3px; flex: none; }
.v svg { width: 11px; height: 11px; }
.s { width: 2px; height: 26px; margin: 0 1px; background: #d5d5d5; flex: none; }
.sketch { width: 70px; display: flex; align-items: center; padding-left: 7px; gap: 4px; font-size: 13.5px; line-height: 20px; }
.sketch svg { width: 20px; height: 20px; }
.sketch span, .search span { margin-top: -2px; }
.var { font: bold 17px/18px "Liberation Serif", serif; }
.search { display: flex; align-items: center; margin: 0 0 0 11px; width: 139px; height: 31px; padding-left: 10px; background: #eee; border-radius: 3px; color: #444; font-size: 13.8px; flex: none; }
.search kbd { height: 19px; margin: 3px 0 0 1px; padding: 0 4px; border: 1px solid #aaa; border-bottom-width: 2px; border-radius: 2px; background: #f6f6f6; font: 10.5px/15px Inter, "DejaVu Sans", sans-serif; }
.search .k1 { margin-left: 2px; padding: 0 2px; width: 32px; }

.stage { display: flex; flex: 1; min-height: 0; }
.panel { width: 206px; border: solid #ccc; border-width: 1px 1px 1px 0; display: flex; flex-direction: column; }
.filter { display: flex; align-items: center; padding: 7px 8px 0 10px; gap: 12px; }
.filter svg { width: 17px; height: 17px; margin-top: 2px; }
.input { width: 158px; height: 30px; border: 1px solid #aaa; border-radius: 3px; padding: 2px 22px 0 6px; color: #888; font-style: italic; font-size: 13.5px; line-height: 23px; }
.input span { display: block; overflow: hidden; white-space: nowrap; }
.feat-head { display: flex; align-items: center; height: 30px; padding-left: 4px; font-size: 13px; }
.feat-head span { width: 101px; }
.fh1 { width: 19px; height: 15px; }
.fh2 { width: 12px; height: 14px; margin: 0 15px; }
.fh3 { width: 19px; height: 19px; }
.group { display: flex; align-items: center; height: 26px; gap: 6px; padding-left: 3px; font-size: 13.2px; margin-top: -1px; }
.group svg { width: 14px; height: 14px; opacity: .8; }
.children { margin: 0 0 0 9px; border-left: 1px solid #ccc; color: #999; }
.children .row { padding-left: 14px; gap: 4px; }
.children svg { opacity: .5; }
.row { display: flex; align-items: center; height: 26px; padding-left: 4px; gap: 4px; font-size: 13px; }
.row svg { width: 18px; height: 18px; flex: none; }
.children .row svg, .part svg { width: 17px; height: 17px; }
.off { color: #999; position: relative; }
.off svg { opacity: .6; }
.row.off .badge { position: absolute; left: 13px; top: 12px; width: 12px; height: 12px; opacity: 1; }
.rollback { width: 190px; height: 7px; margin: 11px 0 0 5px; background: #adadad; flex: none; }
.parts { margin-top: 73px; width: 200px; border-top: 1px solid #ccc; }
.part { padding-left: 24px; }

.canvas { position: relative; flex: 1; min-width: 0; }
.cut * { fill: #fff; stroke: #16222b; stroke-width: 1.5; }
.list-tab { position: absolute; left: -1px; top: 377px; width: 33px; height: 34px; background: #fff; border: 1px solid #aaa; border-left: 0; padding: 7px 0 0 7px; }
.list-tab svg { width: 19px; height: 19px; }
.viewcube { position: absolute; left: 1484px; top: 2px; width: 190px; height: 180px; }
.axis { font: 12px "Noto Sans CJK TC", sans-serif; }
.face { font: 500 11.5px "Noto Sans CJK TC", sans-serif; fill: #222; }
.right-tabs { position: absolute; right: 0; top: 328px; width: 32px; border: solid #aaa; border-width: 1px 0 0 1px; background: #fff; }
.right-tabs span { display: block; height: 33px; border-bottom: 1px solid #aaa; padding: 7px 0 0 6px; color: #333; }
.right-tabs svg { width: 20px; height: 20px; }
.right-tabs .bl { color: #1651b0; }
.vx { font: italic bold 18px "Liberation Serif", serif; fill: #333; }
.measure { position: absolute; right: 11px; bottom: 5px; display: flex; align-items: center; gap: 16px; }
.measure svg { width: 17px; height: 17px; }
.measure .wide { width: 20px; }

.tabs { display: flex; height: 21px; background: #d8d8d8; overflow: hidden; white-space: nowrap; color: #666; }
.plus { width: 34px; height: 28px; padding: 6px 0 0 9px; }
.plus svg { width: 16px; height: 16px; }
.home { width: 40px; height: 28px; background: #e9e9e9; padding: 3px 0 0 8px; }
.home svg { width: 20px; height: 20px; }
.crumb-tab { display: flex; align-items: center; gap: 6px; width: 92px; height: 30px; margin: 0 0 0 -6px; padding: 0 0 7px 17px; background: #fff; font-size: 13.7px; clip-path: polygon(0 0, 82px 0, 91px 17px, 84px 30px, 0 30px, 8px 17px); }
.crumb-tab svg { width: 20px; height: 20px; }
.tab { display: flex; align-items: center; gap: 3px; height: 26px; flex: none; padding-left: 10px; background: #e9e9e9; border-right: 2px solid #d8d8d8; font-size: 13.7px; }
.tab svg { width: 20px; height: 20px; margin-top: 1px; }
.on { background: #fff; color: #333; }
.last { width: 106px; border: 0; overflow: hidden; }
.pager { display: flex; width: 48px; height: 28px; padding: 6px 6px; gap: 15px; background: #d5d5d5; box-shadow: 0 0 8px #888; }
.pager svg { width: 9px; height: 18px; }
```
